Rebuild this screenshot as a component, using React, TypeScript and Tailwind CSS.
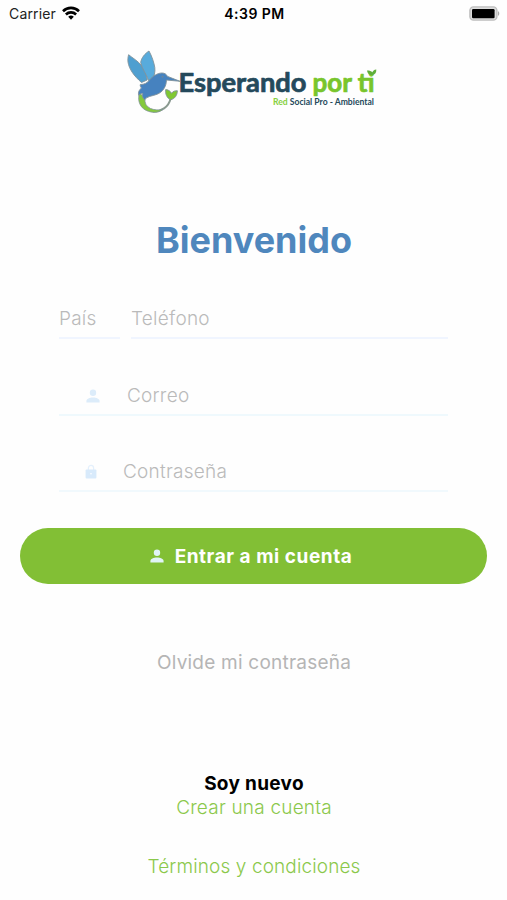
import { FC, ReactNode } from "react";

const PersonIcon: FC<{ className?: string }> = ({ className }) => (
  <svg viewBox="0 0 14 14" className={className} fill="currentColor">
    <circle cx="7" cy="3.8" r="3.2" />
    <path d="M0.4 13.4V12C0.4 9.8 3.6 8.5 7 8.5s6.6 1.3 6.6 3.5v1.4z" />
  </svg>
);

const LockIcon: FC<{ className?: string }> = ({ className }) => (
  <svg viewBox="0 0 12 16" className={className}>
    <path
      d="M3.4 6V4a2.6 2.6 0 0 1 5.2 0V6"
      fill="none"
      stroke="currentColor"
      strokeWidth="1.2"
      opacity="0.7"
    />
    <rect x="0.6" y="5.4" width="10.8" height="9" rx="1" fill="currentColor" />
    <circle cx="6" cy="9.8" r="0.8" fill="#fff" />
  </svg>
);

const StatusBar: FC = () => (
  <div className="h-[26px] pl-[9px] pr-[7px] grid grid-cols-3 items-center text-[14px] text-[#222]">
    <div className="flex items-center gap-[6px]">
      <span className="tracking-[0.15px]">Carrier</span>
      <svg viewBox="0 0 18 14" className="w-[18px] h-[14px] text-black">
        <g fill="none" stroke="currentColor" strokeWidth="2.6">
          <path d="M1 5.2a11.4 11.4 0 0 1 16 0" />
          <path d="M3.9 8.5a7.3 7.3 0 0 1 10.2 0" />
        </g>
        <path d="M9 13.7l-2.8-3a4.1 4.1 0 0 1 5.6 0z" fill="currentColor" />
      </svg>
    </div>
    <span className="text-center font-semibold text-black tracking-[0.45px]">
      4:39 PM
    </span>
    <svg viewBox="0 0 31 15" className="w-[31px] h-[15px] justify-self-end">
      <rect
        x="0.9"
        y="0.9"
        width="27"
        height="13.2"
        rx="3.6"
        fill="#ddd"
        stroke="#bdbdbd"
        strokeWidth="1.4"
      />
      <rect x="3" y="3" width="22.6" height="9.2" rx="1.2" fill="#000" />
      <path d="M29 5.2c1.7.6 1.7 4 0 4.6z" fill="#aaa" />
    </svg>
  </div>
);

const Logo: FC = () => (
  <svg viewBox="120 45 260 75" className="w-[260px] h-[75px] ml-[120px]">
    {/* tail */}
    <path
      d="M153 111.400c8 .6 15.500-4.500 17.500-12.500"
      fill="none"
      stroke="#8a9a90"
      strokeWidth="2"
    />
    <path
      d="M139.500 93c-2.500 8 .5 17.800 13.500 19.300 4 .3 7-.7 10-2.800-8 1.500-19.500-.5-18-11.500z"
      fill="#84c93c"
      stroke="#80929b"
      strokeWidth="0.800"
    />
    <g stroke="#80929b" strokeWidth="0.9" strokeLinejoin="round">
      {/* wings */}
      <path
        d="M141.500 82.500C134 76 129 69 128 62c-.3-2.800 0-5 .6-7.300 4 3.300 9.500 6.300 13 11 2.800 3.800 5 9 5.600 14.300z"
        fill="#4f9fd0"
      />
      <path
        d="M148.500 80.500c-2-6.500-6.500-11.500-7.800-18 .5-4.500 4.300-9 8.300-11.500 2.800 5 5 11.500 5.800 16.500.5 4.500-.4 9-2.800 12z"
        fill="#58abdc"
      />
      {/* body and beak */}
      <path
        d="M140.300 84.500c4 0 7-1.500 9.200-4.500 3.500-4 8-7 12.500-7 2.800 0 4.600 1.300 5.300 3.300l12.700 5-13.500-1.300c-.2 6.500-3.500 12-9.500 14.300-5.500 2-9.500 1.800-12.500 5.500-1.800-2-2.500-3.800-1.800-6.300-1.500 0-3 .5-4 1.800-.8-3 .3-5.500 2.800-7.300-1-1-1.500-2.200-1.200-3.500z"
        fill="#4682bf"
      />
      <path
        d="M170.500 99.800c-3.800-2-5.300-5.800-4.800-10.200 2.900.2 4.800 1.600 5.700 3.700 1.500-2 3.500-2.800 6-2.500-.2 4.700-2.600 8-6.900 9z"
        fill="#80c832"
      />
      <circle cx="162.500" cy="76.800" r="0.500" fill="#24495b" />
    </g>
    {/* wordmark */}
    <text
      x="178.500"
      y="91.500"
      textLength="128"
      lengthAdjust="spacingAndGlyphs"
      strokeLinejoin="round"
      className="fill-[#24495b] stroke-[#24495b] stroke-[0.7px] text-[26px] font-bold font-['Lato',sans-serif]"
    >
      Esperando
    </text>
    <text
      x="312.500"
      y="91.500"
      textLength="62"
      lengthAdjust="spacingAndGlyphs"
      strokeLinejoin="round"
      className="fill-[#78c52c] stroke-[#78c52c] stroke-[0.7px] text-[26px] font-bold font-['Lato',sans-serif]"
    >
      por ti
    </text>
    <path
      d="M372.400 75c-3.500.2-5-1.700-5.400-4.500 2.700 0 4.500.6 5.400 2.200.5-1.800 1.600-3 3.900-3.200.2 3-1 5-3.900 5.500z"
      fill="#5fae3a"
    />
    <text
      x="273"
      y="105"
      textLength="101"
      lengthAdjust="spacingAndGlyphs"
      className="fill-[#24495b] text-[8.5px] font-bold font-['Lato',sans-serif]"
    >
      <tspan fill="#86d03c">Red</tspan> Social Pro - Ambiental
    </text>
  </svg>
);

interface FieldProps {
  label: string;
  icon?: ReactNode;
  className: string;
}

const Field: FC<FieldProps> = ({ label, icon, className }) => (
  <div className={`flex items-center border-b-2 pb-[5px] h-[33px] ${className}`}>
    {icon}
    <span className="text-[19px] leading-6 font-light text-[#bababa] tracking-[0.25px]">
      {label}
    </span>
  </div>
);

export default function App() {
  return (
    <div className="w-full h-[900px] overflow-hidden bg-[#fefefe] font-['Inter',sans-serif] flex flex-col">
      <StatusBar />
      <div className="pt-[19px] h-[196px]">
        <Logo />
      </div>

      <h1 className="pl-px text-center text-[36px] leading-[36px] font-bold text-[#4f87bd]">
        Bienvenido
      </h1>

      <form className="mt-[48px] px-[59px]">
        <div className="flex gap-[11px]">
          <Field label="País" className="w-[61px] border-[#f0f5ff]" />
          <Field label="Teléfono" className="flex-1 border-[#f0f5ff]" />
        </div>
        <Field
          label="Correo"
          icon={
            <PersonIcon className="w-[14px] h-[14px] mx-[27px] text-[#dcecfa]" />
          }
          className="mt-11 border-[#eff9fd]"
        />
        <Field
          label="Contraseña"
          icon={<LockIcon className="w-3 h-4 mx-[26px] text-[#d8eafb]" />}
          className="mt-[43px] border-[#f1f9fd]"
        />
      </form>

      <button
        type="button"
        className="mt-9 mx-[20px] h-14 shrink-0 rounded-full bg-[#82bf35] flex items-center justify-center gap-[11px] pr-[5px] text-white"
      >
        <PersonIcon className="w-[14px] h-[14px] text-[#e0f4f5]" />
        <span className="pt-px text-[19px] leading-6 font-bold tracking-[0.55px]">
          Entrar a mi cuenta
        </span>
      </button>

      <p className="mt-[67px] pl-px text-center text-[19px] leading-6 text-[#b5b5b5] tracking-[0.22px]">
        Olvide mi contraseña
      </p>

      <div className="mt-[97px] pl-px text-center text-[19px] leading-6">
        <p className="font-bold text-black tracking-[0.3px]">Soy nuevo</p>
        <p className="text-[#8bc84b] font-light tracking-[0.2px]">
          Crear una cuenta
        </p>
        <p className="mt-[35px] text-[#8bc84b] font-light tracking-[0.12px]">
          Términos y condiciones
        </p>
      </div>
    </div>
  );
}
